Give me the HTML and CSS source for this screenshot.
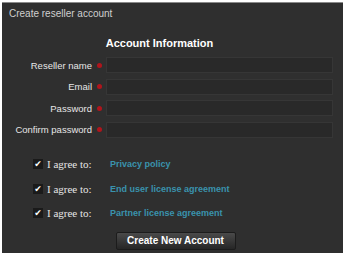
FILE: index.html
```html
<!DOCTYPE html>
<html lang="en">
<head>
    <meta charset="UTF-8">
    <title>Create reseller account</title>
    <link rel="stylesheet" href="styles.css">
</head>
<body>
    <div class="panel">
        <div class="panel-title">Create reseller account</div>
        <h2>Account Information</h2>

        <div class="fields">
            <div class="field">
                <label>Reseller name</label>
                <span class="req"></span>
                <input type="text">
            </div>
            <div class="field">
                <label>Email</label>
                <span class="req"></span>
                <input type="text">
            </div>
            <div class="field">
                <label>Password</label>
                <span class="req"></span>
                <input type="password">
            </div>
            <div class="field">
                <label>Confirm password</label>
                <span class="req"></span>
                <input type="password">
            </div>
        </div>

        <div class="agreements">
            <div class="agree">
                <span class="check">&#10004;</span>
                <span class="agree-text">I agree to:</span>
                <a href="#">Privacy policy</a>
            </div>
            <div class="agree">
                <span class="check">&#10004;</span>
                <span class="agree-text">I agree to:</span>
                <a href="#">End user license agreement</a>
            </div>
            <div class="agree">
                <span class="check">&#10004;</span>
                <span class="agree-text">I agree to:</span>
                <a href="#">Partner license agreement</a>
            </div>
        </div>

        <div class="actions">
            <button class="btn">Create New Account</button>
        </div>
    </div>
</body>
</html>
```

FILE: styles.css
```css
body, html {
    margin: 0;
    padding: 0;
    background: #ffffff;
}

body {
    padding: 2px 2px 3px 2px;
    font-family: 'Liberation Sans', Arial, sans-serif;
}

.panel {
    background: #2f2f2f;
    border-top: 1px solid #8a8a8a;
    height: 251px;
    box-sizing: border-box;
    color: #e8e8e8;
}

.panel-title {
    font-size: 10px;
    color: #d0d0d0;
    padding: 5px 0 0 7px;
    height: 17px;
}

h2 {
    margin: 12px 0 0 0;
    font-size: 11px;
    font-weight: bold;
    color: #fff;
    text-align: center;
    padding-right: 26px;
}

.fields {
    margin-top: 8px;
    display: flex;
    flex-direction: column;
    gap: 5.5px;
}

.field {
    display: flex;
    align-items: center;
    height: 16px;
}

.field label {
    width: 90px;
    text-align: right;
    font-size: 9.5px;
    color: #e6e6e6;
}

.req {
    width: 5px;
    height: 5px;
    border-radius: 50%;
    background: #b0151c;
    margin: 0 4px 0 5px;
}

.field input {
    width: 227px;
    height: 16px;
    box-sizing: border-box;
    background: #292929;
    border: 1px solid #363636;
    padding: 0;
}

.agreements {
    margin-top: 20px;
    display: flex;
    flex-direction: column;
    gap: 11.5px;
    padding-left: 31px;
}

.agree {
    display: flex;
    align-items: center;
    height: 13px;
}

.check {
    width: 10px;
    height: 10px;
    background: #1a1a1a;
    color: #fff;
    font-size: 9px;
    line-height: 10px;
    text-align: center;
    font-family: 'DejaVu Sans', sans-serif;
}

.agree-text {
    font-family: 'Liberation Serif', serif;
    font-size: 11px;
    color: #e6e6e6;
    margin-left: 4px;
    width: 63px;
}

.agree a {
    color: #3a93ad;
    font-size: 9px;
    font-weight: bold;
    text-decoration: none;
    font-family: 'Liberation Sans', Arial, sans-serif;
}

.actions {
    margin-top: 12px;
    display: flex;
    justify-content: center;
    padding-left: 6px;
}

.btn {
    width: 120px;
    height: 18px;
    background: linear-gradient(#4a4a4a, #262626);
    border: 1px solid #1c1c1c;
    border-radius: 2px;
    color: #fff;
    font-family: 'Liberation Sans', Arial, sans-serif;
    font-size: 10px;
    font-weight: bold;
    padding: 0;
}
```
